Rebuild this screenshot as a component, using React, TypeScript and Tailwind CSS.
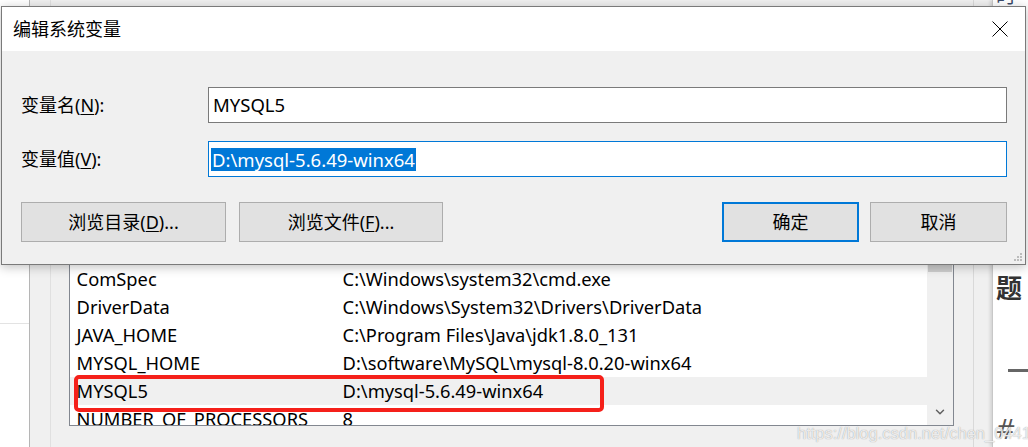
import { ChevronDown } from 'lucide-react';

const rows = [
  { name: 'asl.log', value: 'Destination=file' },
  { name: 'ComSpec', value: 'C:\\Windows\\system32\\cmd.exe' },
  { name: 'DriverData', value: 'C:\\Windows\\System32\\Drivers\\DriverData' },
  { name: 'JAVA_HOME', value: 'C:\\Program Files\\Java\\jdk1.8.0_131' },
  { name: 'MYSQL_HOME', value: 'D:\\software\\MySQL\\mysql-8.0.20-winx64' },
  { name: 'MYSQL5', value: 'D:\\mysql-5.6.49-winx64', active: true },
  { name: 'NUMBER_OF_PROCESSORS', value: '8' },
];

const font = "font-['Noto_Sans','Noto_Sans_CJK_SC',sans-serif]";

function WinButton({ children, primary, width }: { children: React.ReactNode; primary?: boolean; width: string }) {
  return (
    <button
      className={`flex h-[40px] ${width} items-center justify-center bg-[#e1e1e1] text-[18px] text-black ${
        primary ? 'border-2 border-[#0078d7]' : 'border border-[#adadad]'
      }`}
    >
      {children}
    </button>
  );
}

function EnvList() {
  return (
    <div className="relative mt-[236px] flex h-[190px] w-[891px] overflow-hidden border border-[#828790] bg-white">
      <div className="flex flex-1 flex-col">
        {rows.map((r) => (
          <div
            key={r.name}
            className={`flex h-[28px] shrink-0 items-center text-[18.3px] leading-[28px] text-black ${
              r.active ? 'bg-[#f0f0f0]' : ''
            }`}
          >
            <span className="w-[273px] shrink-0 whitespace-nowrap pl-[7px]">{r.name}</span>
            <span className="whitespace-nowrap">{r.value}</span>
          </div>
        ))}
      </div>
      <div className="flex w-[26px] shrink-0 flex-col items-center justify-between bg-[#f0f0f0]">
        <div className="h-[35px] w-[24px] bg-[#cdcdcd]" />
        <ChevronDown className="mb-[6px] h-[14px] w-[14px] text-[#606060]" strokeWidth={2.5} />
      </div>
    </div>
  );
}

export default function App() {
  return (
    <div className={`relative h-[447px] w-[1028px] overflow-hidden bg-[#f0f0f0] ${font}`}>
      {/* window behind */}
      <div className="flex h-full">
        <div className="flex w-[29px] flex-col bg-white">
          <div className="h-[324px] border-b border-[#e3e3e3]" />
        </div>
        <div className="w-[21px] border-l border-[#b5b5b5] bg-[#f0f0f0]" />
        <div className="w-[19px] border-l border-[#e0e0e0] bg-[#f0f0f0]" />
        <EnvList />
        <div className="w-[19px] bg-[#f0f0f0]" />
        <div className="w-[19px] border-l border-[#d9d9d9] bg-[#f0f0f0]" />
        <div className="flex flex-1 flex-col border-l border-[#c8c8c8] bg-white pl-[3px] shadow-[-2px_0_3px_rgba(0,0,0,0.12)]">
          <span className="-mt-[14px] text-[20px] leading-[20px] text-[#3a4a6a]">时间</span>
          <span className="mt-[247px] text-[26px] font-bold leading-[30px] text-[#333]">题</span>
          <div className="ml-[12px] mt-[66px] h-[3px] w-[20px] bg-[#666]" />
          <span className="ml-[0px] mt-[42px] text-[28px] italic leading-[28px] text-[#555]">#</span>
        </div>
      </div>

      {/* annotation */}
      <div className="absolute left-[74px] top-[375px] h-[37px] w-[530px] rounded-[5px] border-4 border-[#f5201a]" />

      {/* watermark */}
      <div className="absolute left-[797px] top-[421px] font-['Liberation_Sans',sans-serif] text-[16.5px] text-white/80 [text-shadow:0_0_1px_#8a8a8a]">
        https://blog.csdn.net/chen_0441
      </div>

      {/* dialog */}
      <div className="absolute left-[1px] top-[6px] flex h-[259px] w-[1025px] flex-col border border-[#7a7a7a] bg-[#f0f0f0] shadow-[0_2px_10px_rgba(0,0,0,0.25)]">
        <div className="flex h-[44px] shrink-0 items-center justify-between bg-white pl-[11px] pr-[17px]">
          <span className="text-[18px] text-black">编辑系统变量</span>
          <svg width="16" height="16" viewBox="0 0 16 16" className="text-black">
            <path d="M0.5 0.5L15.5 15.5M15.5 0.5L0.5 15.5" stroke="currentColor" strokeWidth="1" />
          </svg>
        </div>
        <div className="flex flex-1 flex-col pl-[19px] pr-[18px] pt-[36px]">
          <div className="flex h-[36px] items-center">
            <span className="w-[187px] text-[18px] text-black">
              变量名(<span className="underline underline-offset-2">N</span>):
            </span>
            <div className="flex h-[36px] flex-1 items-center border border-[#7a7a7a] bg-white pl-[4px] text-[18.5px] text-black">
              MYSQL5
            </div>
          </div>
          <div className="mt-[18px] flex h-[36px] items-center">
            <span className="w-[187px] text-[18px] text-black">
              变量值(<span className="underline underline-offset-2">V</span>):
            </span>
            <div className="flex h-[36px] flex-1 items-center border border-[#0078d7] bg-white pl-[2px] text-[18.5px]">
              <span className="bg-[#0078d7] px-[1px] leading-[23px] text-white">D:\mysql-5.6.49-winx64</span>
            </div>
          </div>
          <div className="mt-[25px] flex items-center">
            <WinButton width="w-[205px]">
              浏览目录(<span className="underline underline-offset-2">D</span>)...
            </WinButton>
            <div className="ml-[13px]">
              <WinButton width="w-[204px]">
                浏览文件(<span className="underline underline-offset-2">F</span>)...
              </WinButton>
            </div>
            <div className="flex-1" />
            <WinButton width="w-[137px]" primary>
              确定
            </WinButton>
            <div className="ml-[11px]">
              <WinButton width="w-[137px]">取消</WinButton>
            </div>
          </div>
        </div>
        {/* size grip */}
        <svg width="10" height="10" viewBox="0 0 10 10" className="absolute bottom-[2px] right-[3px]">
          {[
            [8, 0],
            [5, 3],
            [8, 3],
            [2, 6],
            [5, 6],
            [8, 6],
          ].map(([x, y]) => (
            <rect key={`${x}-${y}`} x={x} y={y + 1} width="2" height="2" fill="#bcbcbc" />
          ))}
        </svg>
      </div>
    </div>
  );
}
